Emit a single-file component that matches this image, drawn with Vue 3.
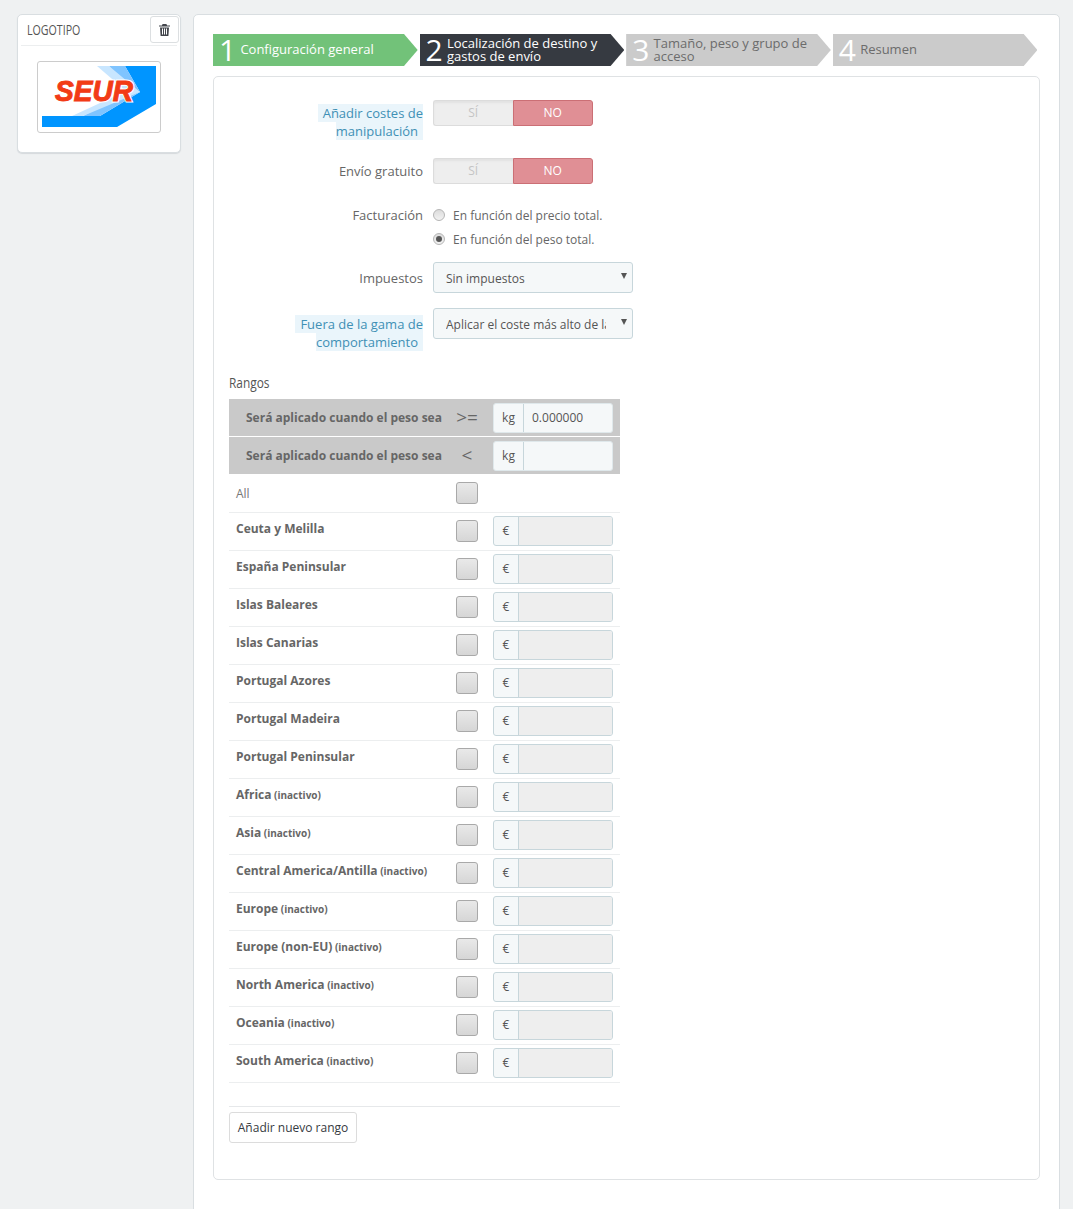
<template>
  <div class="page">
    <aside class="logo-panel">
      <div class="logo-head">
        <span class="logo-title">LOGOTIPO</span>
        <button class="trash-btn" type="button">
          <svg width="11" height="12" viewBox="0 0 11 12">
            <path fill="#43464c" d="M3.6 0h3.8l.7 1.4H11v1.2H0V1.4h2.9zM1 3.4h9L9.4 12H1.6zM3 4.6v6h1v-6zm2 0v6h1v-6zm2 0v6h1v-6z" />
          </svg>
        </button>
      </div>
      <div class="logo-box">
        <svg width="114" height="62" viewBox="0 0 114 62">
          <polygon fill="#0095ff" points="83,0 114,0 114,38 75,61 0,61 0,50 58,50 98,26" />
          <polygon fill="#7fc4ff" points="67,0 83,0 98,26 58,50 41,50 88,25" />
          <polygon fill="#c8e6ff" points="55,0 67,0 98,26 41,50 30,50 84,25" />
          <text class="seur seur-back" x="13" y="35" textLength="78" lengthAdjust="spacingAndGlyphs" aria-hidden="true">SEUR</text>
          <text class="seur" x="13" y="35" textLength="78" lengthAdjust="spacingAndGlyphs">SEUR</text>
        </svg>
      </div>
    </aside>

    <main class="main-panel">
      <ol class="steps">
        <li v-for="(step, i) in steps" :key="step" class="step" :class="stepClass(i)">
          <span class="step-num">{{ i + 1 }}</span>
          <span class="step-text">{{ step }}</span>
        </li>
      </ol>

      <section class="form-box">
        <div class="form-row row-help">
          <div class="form-label"><span class="hint">Añadir costes de manipulación</span></div>
          <div class="toggle"><span class="toggle-yes">SÍ</span><span class="toggle-no">NO</span></div>
        </div>
        <div class="form-row row-free">
          <div class="form-label">Envío gratuito</div>
          <div class="toggle"><span class="toggle-yes">SÍ</span><span class="toggle-no">NO</span></div>
        </div>
        <div class="form-row row-billing">
          <div class="form-label label-billing">Facturación</div>
          <div class="radios">
            <label class="radio-line"><span class="radio"></span>En función del precio total.</label>
            <label class="radio-line"><span class="radio checked"></span>En función del peso total.</label>
          </div>
        </div>
        <div class="form-row row-tax">
          <div class="form-label label-select">Impuestos</div>
          <div class="select"><span class="select-text">Sin impuestos</span></div>
        </div>
        <div class="form-row">
          <div class="form-label label-select"><span class="hint">Fuera de la gama de comportamiento</span></div>
          <div class="select"><span class="select-text">Aplicar el coste más alto de la franja definida</span></div>
        </div>

        <h3 class="ranges-title">Rangos</h3>

        <div class="ranges">
          <div v-for="head in headRows" :key="head.sign" class="range-row range-head">
            <div class="head-name">Será aplicado cuando el peso sea</div>
            <div class="sign">{{ head.sign }}</div>
            <div class="input-group head-input">
              <span class="addon addon-kg">kg</span>
              <span class="input-value">{{ head.value }}</span>
            </div>
          </div>

          <div class="range-row">
            <div class="zone-name zone-all">All</div>
            <span class="check"></span>
          </div>

          <div v-for="zone in zones" :key="zone.name" class="range-row">
            <div class="zone-name">
              <strong>{{ zone.name }}</strong>
              <small v-if="zone.off"> (inactivo)</small>
            </div>
            <span class="check"></span>
            <div class="input-group">
              <span class="addon">€</span>
              <span class="input-value disabled"></span>
            </div>
          </div>
        </div>

        <div class="ranges-foot">
          <button class="add-btn" type="button">Añadir nuevo rango</button>
        </div>
      </section>
    </main>
  </div>
</template>

<script setup>
const steps = [
  'Configuración general',
  'Localización de destino y gastos de envío',
  'Tamaño, peso y grupo de acceso',
  'Resumen'
]

const stepClass = (i) => {
  if (i === 0) return 'done'
  if (i === 1) return 'current'
  return 'todo'
}

const headRows = [
  { sign: '>=', value: '0.000000' },
  { sign: '<', value: '' }
]

const zones = [
  { name: 'Ceuta y Melilla' },
  { name: 'España Peninsular' },
  { name: 'Islas Baleares' },
  { name: 'Islas Canarias' },
  { name: 'Portugal Azores' },
  { name: 'Portugal Madeira' },
  { name: 'Portugal Peninsular' },
  { name: 'Africa', off: true },
  { name: 'Asia', off: true },
  { name: 'Central America/Antilla', off: true },
  { name: 'Europe', off: true },
  { name: 'Europe (non-EU)', off: true },
  { name: 'North America', off: true },
  { name: 'Oceania', off: true },
  { name: 'South America', off: true }
]
</script>

<style>
html, body {
  margin: 0;
  height: 1209px;
  overflow: hidden;
  background: #eff1f2;
}
</style>

<style scoped>
.page {
  display: flex;
  align-items: flex-start;
  gap: 12px;
  height: 1209px;
  overflow: hidden;
  box-sizing: border-box;
  padding: 14px 13px 0 17px;
  font-family: "Open Sans", sans-serif;
  font-size: 12px;
  color: #666;
}

/* left logo card */
.logo-panel {
  width: 164px;
  height: 139px;
  box-sizing: border-box;
  flex: none;
  background: #fff;
  border: 1px solid #d9dee1;
  border-radius: 5px;
  box-shadow: 0 1px 1px #d5d9dc;
  padding: 1px 3px 0;
}

.logo-head {
  display: flex;
  align-items: flex-start;
  justify-content: space-between;
  height: 30px;
  box-sizing: border-box;
  border-bottom: 1px solid #eceeef;
}

.logo-title {
  margin: 4px 0 0 6px;
  font-size: 14px;
  line-height: 20px;
  color: #555;
  transform: scaleX(0.76);
  transform-origin: left;
}

.trash-btn {
  display: flex;
  align-items: center;
  justify-content: center;
  width: 29px;
  height: 27px;
  margin-right: -2px;
  padding: 0;
  background: #fff;
  border: 1px solid #dcdfe1;
  border-radius: 3px;
}

.logo-box {
  width: 124px;
  height: 72px;
  box-sizing: border-box;
  margin: 15px 0 0 16px;
  padding: 4px;
  border: 1px solid #ccc;
  border-radius: 3px;
  background: #fff;
}

.logo-box svg {
  display: block;
}

.seur {
  font-family: "Liberation Sans", sans-serif;
  font-size: 29px;
  font-weight: 700;
  font-style: italic;
  fill: #f23b16;
  stroke: #f23b16;
  stroke-width: 1px;
}

.seur-back {
  fill: #fff;
  stroke: #fff;
  stroke-width: 3px;
}

/* main card */
.main-panel {
  flex: 1;
  min-height: 1240px;
  box-sizing: border-box;
  background: #fff;
  border: 1px solid #d9dee1;
  border-radius: 5px;
  padding: 19px 19px 0;
}

.steps {
  display: grid;
  grid-template-columns: repeat(4, 204.7px);
  gap: 1.9px;
  margin: 0 0 10px;
  padding: 0;
  list-style: none;
}

.step {
  display: flex;
  align-items: center;
  height: 32px;
  padding-left: 6px;
  box-sizing: border-box;
  clip-path: polygon(0 0, 191px 0, 100% 50%, 191px 100%, 0 100%);
}

.step.done {
  background: #72c279;
  color: #fff;
}

.step.current {
  background: #363a41;
  color: #fff;
}

.step.todo {
  background: #cbcbcb;
  color: #6c6c6c;
}

.step-num {
  flex: none;
  width: 21.4px;
  font-size: 30px;
  font-weight: 400;
  line-height: 32px;
  color: #fff;
}

.step-text {
  width: 160px;
  padding-bottom: 1px;
  font-size: 13px;
  line-height: 13px;
}

/* form */
.form-box {
  box-sizing: border-box;
  height: 1104px;
  border: 1px solid #dfe2e4;
  border-radius: 5px;
  padding: 23px 15px 0;
}

.form-row {
  display: flex;
  align-items: flex-start;
  gap: 10px;
}

.row-help {
  margin-bottom: 18px;
}

.row-free {
  margin-bottom: 19px;
}

.row-billing {
  margin-bottom: 11px;
}

.row-tax {
  margin-bottom: 15px;
}

.form-label {
  width: 194px;
  flex: none;
  padding: 4px 0 0 54px;
  box-sizing: border-box;
  font-size: 13px;
  line-height: 18px;
  text-align: right;
}

.label-billing {
  padding-top: 3px;
}

.label-select {
  padding-top: 7px;
}

.hint {
  padding: 0 5px;
  background: #eaf5fb;
  color: #3f90b5;
}

.toggle {
  display: flex;
  width: 160px;
  height: 26px;
  font-size: 12px;
  line-height: 24px;
  text-align: center;
}

.toggle-yes,
.toggle-no {
  flex: 1;
  box-sizing: border-box;
  border: 1px solid;
}

.toggle-yes {
  background: #eee;
  border-color: #dcdcdc;
  border-right: 0;
  border-radius: 3px 0 0 3px;
  color: #c4c4c4;
  box-shadow: inset 0 2px 2px #e2e2e2;
}

.toggle-no {
  background: #e08f95;
  border-color: #cb6f75;
  border-radius: 0 3px 3px 0;
  color: #fff;
}

.radios {
  display: flex;
  flex-direction: column;
}

.radio-line {
  display: flex;
  align-items: center;
  gap: 8px;
  height: 24px;
  font-size: 12px;
}

.radio {
  position: relative;
  width: 12px;
  height: 12px;
  box-sizing: border-box;
  border: 1px solid #b5b5b5;
  border-radius: 50%;
  background: linear-gradient(#dcdcdc, #f2f2f2);
}

.radio.checked::after {
  content: "";
  position: absolute;
  top: 2px;
  left: 2px;
  width: 6px;
  height: 6px;
  border-radius: 50%;
  background: #555;
}

.select {
  position: relative;
  width: 200px;
  height: 31px;
  box-sizing: border-box;
  padding: 0 26px 0 12px;
  background: #f5f8f9;
  border: 1px solid #c7d6db;
  border-radius: 3px;
  color: #555;
  line-height: 31px;
}

.select::after {
  content: "";
  position: absolute;
  top: 10px;
  right: 5px;
  border-style: solid;
  border-width: 6px 3.5px 0;
  border-color: #555 transparent transparent;
}

.select-text {
  display: block;
  overflow: hidden;
  white-space: nowrap;
}

.ranges-title {
  margin: 23px 0 7px;
  font-size: 14px;
  font-weight: 400;
  line-height: 18px;
  color: #555;
  transform: scaleX(0.85);
  transform-origin: left;
}

.ranges {
  width: 391px;
}

.range-row {
  display: flex;
  align-items: flex-start;
  height: 38px;
  box-sizing: border-box;
  border-bottom: 1px solid #eceeef;
}

.range-head {
  align-items: center;
  background: #c9c9c9;
  border-bottom-color: #fff;
}

.head-name {
  width: 227px;
  flex: none;
  padding: 0 0 1px 17px;
  box-sizing: border-box;
  font-size: 12px;
  font-weight: 700;
  white-space: nowrap;
}

.sign {
  display: flex;
  justify-content: center;
  width: 22px;
  margin-right: 15px;
  padding-bottom: 1px;
  flex: none;
  font-size: 19px;
  line-height: 24px;
  white-space: nowrap;
}

.zone-name {
  width: 227px;
  flex: none;
  padding: 7px 0 0 7px;
  box-sizing: border-box;
  line-height: 18px;
  white-space: nowrap;
}

.zone-name strong {
  font-weight: 700;
  font-size: 12px;
}

.zone-name small {
  font-size: 10px;
  font-weight: 700;
}

.zone-all {
  padding-top: 10px;
  color: #777;
}

.check {
  flex: none;
  width: 22px;
  height: 22px;
  margin: 7px 15px 0 0;
  box-sizing: border-box;
  background: linear-gradient(#e9e9e9, #d6d6d6);
  border: 1px solid #a9a9a9;
  border-radius: 3px;
}

.input-group {
  display: flex;
  width: 120px;
  height: 30px;
  margin-top: 3px;
  box-sizing: border-box;
  border: 1px solid #c7d6db;
  border-radius: 3px;
  background: #f5f8f9;
  line-height: 28px;
  color: #555;
}

.head-input {
  margin-top: 0;
  border-color: #dfe8eb;
}

.addon {
  width: 24px;
  flex: none;
  text-align: center;
  border-right: 1px solid #c7d6db;
}

.addon-kg {
  width: 29px;
}

.input-value {
  flex: 1;
  padding-left: 8px;
}

.input-value.disabled {
  background: #eee;
  border-radius: 0 2px 2px 0;
}

.ranges-foot {
  width: 391px;
  margin-top: 23px;
  padding-top: 5px;
  border-top: 1px solid #e6e8ea;
}

.add-btn {
  display: block;
  width: 128px;
  height: 31px;
  padding: 0;
  background: #fff;
  border: 1px solid #dcdcdc;
  border-radius: 3px;
  font-family: "Open Sans", sans-serif;
  font-size: 12px;
  color: #363a41;
}
</style>
